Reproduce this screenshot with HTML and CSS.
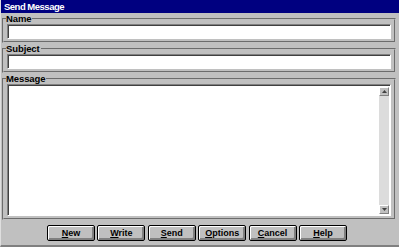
FILE: index.html
```html
<!DOCTYPE html>
<html lang="en">
<head>
    <meta charset="UTF-8">
    <title>Send Message</title>
    <link rel="stylesheet" href="styles.css">
</head>
<body>
    <div class="window">
        <div class="titlebar">Send Message</div>
        <fieldset class="group">
            <legend>Name</legend>
            <div class="field"></div>
        </fieldset>
        <fieldset class="group">
            <legend>Subject</legend>
            <div class="field"></div>
        </fieldset>
        <fieldset class="group">
            <legend>Message</legend>
            <div class="msgbox">
                <div class="msgtext"></div>
                <div class="vscroll">
                    <div class="arrow">
                        <svg width="5" height="3" viewBox="0 0 5 3"><path d="M2.5 0L5 3H0z" fill="#404040"/></svg>
                    </div>
                    <div class="track"></div>
                    <div class="arrow">
                        <svg width="5" height="3" viewBox="0 0 5 3"><path d="M0 0H5L2.5 3z" fill="#404040"/></svg>
                    </div>
                </div>
            </div>
        </fieldset>
        <div class="buttons">
            <button class="btn"><u>N</u>ew</button>
            <button class="btn"><u>W</u>rite</button>
            <button class="btn"><u>S</u>end</button>
            <button class="btn"><u>O</u>ptions</button>
            <button class="btn"><u>C</u>ancel</button>
            <button class="btn"><u>H</u>elp</button>
        </div>
    </div>
</body>
</html>
```

FILE: styles.css
```css
body { margin: 0; background: #c0c0c0; font-family: "Liberation Sans", Arial, sans-serif; }
.window { width: 399px; height: 247px; box-sizing: border-box; display: flex; flex-direction: column; background: #c0c0c0; border-bottom: 2px solid #808080; border-left: 1px solid #dfdfdf; }
.titlebar { height: 13px; background: #000080; color: #fff; font-weight: bold; font-size: 9.5px; line-height: 13px; padding-left: 3px; letter-spacing: -0.5px; }

.group { margin: 1px 3px 0 1px; padding: 0 3px 2px; border: 2px groove #c0c0c0; min-width: 0; }
.group legend { font-weight: bold; font-size: 9.5px; line-height: 10px; height: 10px; padding: 0 1px 0 0; margin-left: -1px; color: #000; letter-spacing: -0.1px; }

.field { height: 15px; box-sizing: border-box; background: #fff; border: 1px solid; border-color: #808080 #fff #fff #808080; box-shadow: inset 1px 1px #404040; }

.msgbox { height: 132px; box-sizing: border-box; display: flex; background: #fff; border: 1px solid; border-color: #808080 #fff #fff #808080; box-shadow: inset 1px 1px #404040; padding: 2px 1px 1px 2px; }
.msgtext { flex: 1; }
.vscroll { width: 10px; display: flex; flex-direction: column; background: #dcdcdc; }
.vscroll .track { flex: 1; }
.arrow { height: 9px; box-sizing: border-box; background: #c0c0c0; border: 1px solid; border-color: #fff #808080 #808080 #fff; display: flex; align-items: center; justify-content: center; }

.buttons { display: flex; gap: 2.4px; padding-left: 46px; margin-top: 5px; }
.btn { width: 48px; height: 16px; box-sizing: border-box; padding: 0; border: 1px solid #000; border-radius: 2px; background: #c0c0c0; box-shadow: inset 1px 1px #fff, inset -2px -2px #808080; font-family: "Liberation Sans", Arial, sans-serif; font-weight: bold; font-size: 9px; color: #000; }
```
